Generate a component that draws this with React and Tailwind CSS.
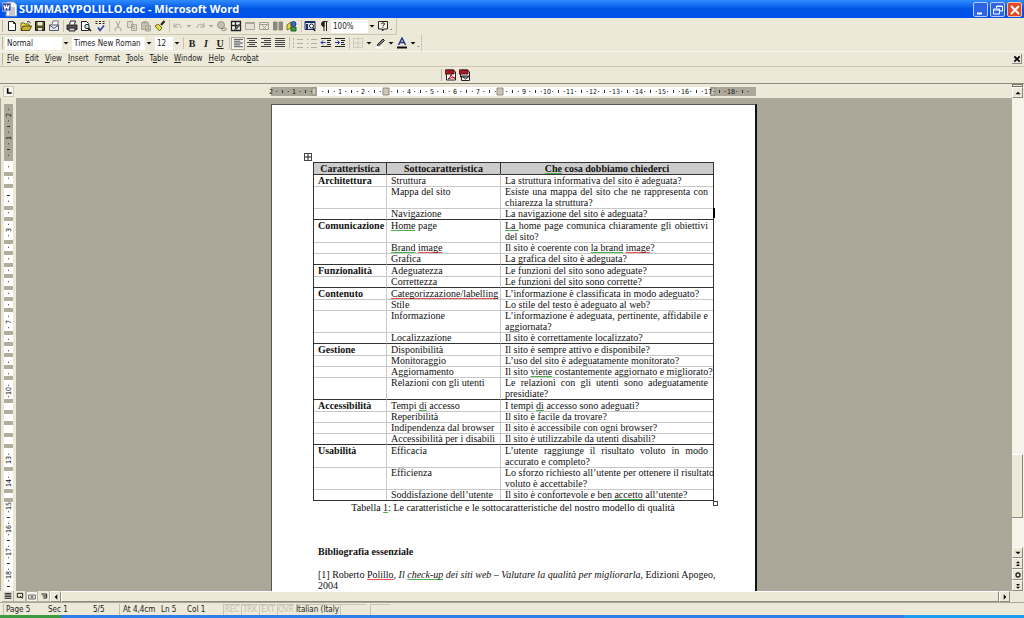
import { Fragment } from 'react';
import clsx from 'clsx';

// a question is a list of lines, the way the document breaks them
const GROUPS = [
  {
    name: 'Architettura',
    rows: [
      ['Struttura', ['La struttura informativa del sito è adeguata?']],
      ['Mappa del sito', ['Esiste una mappa del sito che ne rappresenta con', 'chiarezza la struttura?']],
      ['Navigazione', ['La navigazione del sito è adeguata?'], true],
    ],
  },
  {
    name: 'Comunicazione',
    rows: [
      [<><Green>Home</Green> page</>, [<><Green>La </Green>home page comunica chiaramente gli obiettivi</>, 'del sito?']],
      [<><Green>Brand</Green> <Red>image</Red></>, [<>Il sito è coerente con <Green>la brand</Green> <Red>image</Red>?</>]],
      ['Grafica', ['La grafica del sito è adeguata?']],
    ],
  },
  {
    name: 'Funzionalità',
    rows: [
      ['Adeguatezza', ['Le funzioni del sito sono adeguate?']],
      ['Correttezza', ['Le funzioni del sito sono corrette?']],
    ],
  },
  {
    name: 'Contenuto',
    rows: [
      [<Red>Categorizzazione/labelling</Red>, ['L’informazione è classificata in modo adeguato?']],
      ['Stile', ['Lo stile del testo è adeguato al web?']],
      ['Informazione', ['L’informazione è adeguata, pertinente, affidabile e', 'aggiornata?']],
      ['Localizzazione', ['Il sito è correttamente localizzato?']],
    ],
  },
  {
    name: 'Gestione',
    rows: [
      ['Disponibilità', ['Il sito è sempre attivo e disponibile?']],
      ['Monitoraggio', ['L’uso del sito è adeguatamente monitorato?']],
      ['Aggiornamento', [<>Il sito <Green>viene</Green> costantemente aggiornato e migliorato?</>]],
      ['Relazioni con gli utenti', ['Le relazioni con gli utenti sono adeguatamente', 'presidiate?']],
    ],
  },
  {
    name: 'Accessibilità',
    rows: [
      [<>Tempi <Green>di</Green> accesso</>, [<>I tempi <Green>di</Green> accesso sono adeguati?</>]],
      ['Reperibilità', ['Il sito è facile da trovare?']],
      ['Indipendenza dal browser', ['Il sito è accessibile con ogni browser?']],
      ['Accessibilità per i disabili', ['Il sito è utilizzabile da utenti disabili?']],
    ],
  },
  {
    name: 'Usabilità',
    rows: [
      ['Efficacia', ['L’utente raggiunge il risultato voluto in modo', 'accurato e completo?']],
      ['Efficienza', ['Lo sforzo richiesto all’utente per ottenere il risultato', 'voluto è accettabile?']],
      ['Soddisfazione dell’utente', [<>Il sito è confortevole e ben <Green>accetto</Green> all’utente?</>]],
    ],
  },
];

const MENUS = [
  ['', 'F', 'ile'], ['', 'E', 'dit'], ['', 'V', 'iew'], ['', 'I', 'nsert'], ['F', 'o', 'rmat'],
  ['', 'T', 'ools'], ['T', 'a', 'ble'], ['', 'W', 'indow'], ['', 'H', 'elp'], ['Acro', 'b', 'at'],
];

// row boundaries shown on the vertical ruler, from the top of the page
const ROW_MARKS = [70, 82, 104, 115, 138, 149, 161, 172, 184, 195, 206, 229, 240, 251, 263, 274, 297, 308, 319, 331, 342, 365, 387, 396];

function Green({ children }) {
  return <span className="underline decoration-[#4fb04f] decoration-solid decoration-1 underline-offset-1 [text-decoration-skip-ink:none]">{children}</span>;
}

function Red({ children }) {
  return <span className="underline decoration-[#f05050] decoration-solid decoration-1 underline-offset-1 [text-decoration-skip-ink:none]">{children}</span>;
}

function Icon({ children, size = 12 }) {
  return (
    <svg width={size} height={size} viewBox="0 0 12 12" fill="none" stroke="#222" strokeWidth="1" className="shrink-0">
      {children}
    </svg>
  );
}

const ICONS = {
  new: <path d="M2.500 1.500h5l2 2v7h-7zM7.500 1.500v2h2" fill="#fff" />,
  open: <><path d="M1 10V3h3l1 1h4v2" fill="#f5e05a" stroke="#6b6414" /><path d="M1 10.500l2-4.500h8.500l-2 4.500z" fill="#c9b52e" stroke="#4b460e" /><path d="M7 2q2-1.500 3.500 1" /></>,
  save: <><path d="M1.500 1.500h9v9h-9z" fill="#55551c" stroke="#111" /><path d="M3.500 2h5v3.500h-5z" fill="#e9e9d6" stroke="none" /><path d="M4 8h4v2.500H4z" fill="#ddd" stroke="none" /></>,
  mail: <><path d="M4 4.500l1-3.500h5.500l-1 4" fill="#fff" stroke="#778" /><path d="M1.500 5h9v5.500h-9z" fill="#e6e9f2" stroke="#556" /><path d="M1.500 5l4.500 3.500 4.500-3.500" stroke="#557" /></>,
  print: <><path d="M3.500 4.500l1-3.500h5l-1 3.500" fill="#fff" /><path d="M1 5h10v4.500H1z" fill="#555" /><path d="M3 8h6v3H3z" fill="#ccc" /></>,
  preview: <><path d="M1.500 1.500h5l2 2v7h-7z" fill="#fff" /><circle cx="7" cy="6.500" r="2.200" fill="#bfe4ee" /><path d="M8.600 8.300l2.400 2.700" strokeWidth="1.600" /></>,
  spell: <><path d="M1.500 3.500h2M5 3.500h2M8.500 3.500h2M1.500 1.500h2M5 1.500h2M8.500 1.500h2" strokeWidth="1.200" /><path d="M4 7.500l2 3 4-5" stroke="#2a3aa8" strokeWidth="1.600" /></>,
  cut: <path d="M4 1l3 7M8 1L5 8M4 11a1.500 1.500 0 1 1 1-3M8 11a1.500 1.500 0 1 0-1-3" stroke="#aaa799" />,
  copy: <path d="M1.500 1.500h5v6h-5zM5.500 4.500h5v6h-5zM7 6.500h2M7 8.500h2" stroke="#aaa799" fill="#dedbcb" />,
  paste: <path d="M1.500 2.500h7v7h-7zM3.500 1.500h3v1.500h-3zM5.500 5.500h5v5.500h-5z" stroke="#aaa799" fill="#c5c2b3" />,
  brush: <><path d="M10.500 1L7 5" strokeWidth="2" /><path d="M4 4l4 4-2.500 3L1 6z" fill="#e9df4c" stroke="#6d6713" /></>,
  undo: <path d="M2 3v4h4M2 6.500C4 3 9 3.500 9 8" stroke="#aaa799" />,
  redo: <path d="M10 3v4H6M10 6.500C8 3 3 3.500 3 8" stroke="#aaa799" />,
  link: <><circle cx="5" cy="5" r="3.500" fill="#c2bfb1" stroke="#9a978a" /><path d="M5 8.500h2q2-2 4 1M5 9.500q2 2 5 .5" stroke="#88857a" /></>,
  tables: <><path d="M1.500 1.500h9v9h-9zM1.500 5.500h9M5.500 1.500v9" fill="#fff" strokeWidth="1.300" /><path d="M5 10l5-6" stroke="#555" strokeWidth="2" /></>,
  table: <><path d="M1.500 2.500h9v7h-9z" stroke="#aaa799" fill="#e6e3d4" /><path d="M1.500 3h9" stroke="#aaa799" strokeWidth="2" /></>,
  excel: <path d="M1.500 2.500h9v7h-9zM1.500 4.500h9M4 5l5 5M9 5l-5 5" stroke="#a3a092" />,
  columns: <path d="M1.500 2h3.500v8H1.500zM7 2h3.500v8H7z" fill="#8b887c" stroke="#8b887c" />,
  drawing: <><path d="M1 5l4-3v6l-4 2z" fill="#e8d84a" stroke="#7a7118" /><circle cx="7.500" cy="4" r="2.500" fill="#3a6ad0" stroke="#1c3c80" /><path d="M5 7h5v4H5z" fill="#3d9a4b" stroke="#1a5a22" /></>,
  docmap: <><path d="M1 1.500h10v8H1z" fill="#dfe6f6" stroke="#1c2c66" /><path d="M1 2h10M3 4v6" stroke="#1c2c66" strokeWidth="2" /><circle cx="7.500" cy="6" r="2" fill="#fff" /><path d="M9 8l2 3" strokeWidth="1.500" /></>,
  para: <><path d="M5.500 1.500h4M6 1v10M8.500 1v10" /><path d="M6 1.500a2.300 2.300 0 0 0 0 5z" fill="#222" /></>,
  help: <><path d="M1.500 1.500h9v7.500H7l-1.500 2v-2h-4z" fill="#f4f2e4" /><path d="M4.500 4q0-1.200 1.500-1.200T7.500 4Q7.500 5 6 5.500v.800M6 7.200v1" /></>,
  left: <path d="M1 1.500h10M1 3.500h7M1 5.500h10M1 7.500h7M1 9.500h10" stroke="#444" />,
  center: <path d="M1 1.500h10M3 3.500h6M1 5.500h10M3 7.500h6M1 9.500h10" stroke="#444" />,
  right: <path d="M1 1.500h10M4 3.500h7M1 5.500h10M4 7.500h7M1 9.500h10" stroke="#444" />,
  justify: <path d="M1 1.500h10M1 3.500h10M1 5.500h10M1 7.500h10M1 9.500h10" stroke="#444" />,
  numbers: <path d="M1.500 1v2.500M1.500 5v2.500M1.500 9v2M5 2.500h6M5 6.500h6M5 10.500h6" stroke="#b3b0a2" />,
  bullets: <path d="M1 2.500h1.500M1 6.500h1.500M1 10.500h1.500M5 2.500h6M5 6.500h6M5 10.500h6" stroke="#b3b0a2" />,
  outdent: <><path d="M1 1.500h10M7 3.500h4M7 5.500h3M7 7.500h4M1 9.500h10" /><path d="M5.500 5.500H1M3 3.500l-2 2 2 2" stroke="#2233aa" /></>,
  indent: <><path d="M1 1.500h10M7 3.500h4M7 5.500h3M7 7.500h4M1 9.500h10" /><path d="M1 5.500h4.500M3.500 3.500l2 2-2 2" stroke="#2233aa" /></>,
  borders: <path d="M1.500 1.500h9v9h-9zM1.500 6h9M6 1.500v9" stroke="#b3b0a2" strokeDasharray="1 1" />,
  marker: <><path d="M3 8l6-6 1.500 1.500-6 5.500z" fill="#888" /><path d="M1 10.500h8" stroke="#fff" strokeWidth="2" /></>,
  color: <><path d="M2.500 8L6 1l3.500 7M3.800 5.500h4.400" stroke="#22307e" strokeWidth="1.400" /><path d="M1 10.500h10" stroke="#111" strokeWidth="2" /></>,
  pdf: <><path d="M1.500 1h7l2 2v8h-9z" fill="#fff" /><path d="M0 1h9v4H0z" fill="#a51d22" stroke="#5b1013" /><path d="M3 10q3-2 3-4.500Q7 9 10 9 6 8 3 10" stroke="#b3161c" /></>,
  pdfMail: <><path d="M1.500 1h7l2 2v5h-9z" fill="#fff" /><path d="M0 1h9v4H0z" fill="#a51d22" stroke="#5b1013" /><path d="M2.500 7h8v4.500h-8zM2.500 7l4 3 4-3" fill="#eee" /></>,
};

function Tool({ name, label, pressed }) {
  return (
    <button
      type="button"
      aria-label={label || name}
      className={clsx('flex h-[13px] w-[14px] shrink-0 items-center justify-center', pressed && 'border border-[#aca899] bg-[#f7f6f0]')}>
      <Icon size={pressed ? 11 : 12}>{ICONS[name]}</Icon>
    </button>
  );
}

function Arrow({ muted }) {
  return (
    <svg width="8" height="8" viewBox="0 0 8 8" className="shrink-0">
      <path d="M1.500 3h5L4 5.500z" fill={muted ? '#aaa799' : '#111'} />
    </svg>
  );
}

function Sep() {
  return <span className="ml-[2px] mr-px h-3 w-px shrink-0 bg-[#c5c2b2]" />;
}

function Grip() {
  return <span className="mx-[2px] h-3 w-px shrink-0 bg-[#b5b2a3]" />;
}

function Picker({ label, value, width }) {
  return (
    <div className="flex items-center">
      <select aria-label={label} className={clsx('h-[13px] appearance-none bg-white pl-[2px] text-[8px] leading-[13px]', width)}>
        <option>{value}</option>
      </select>
      <Arrow />
    </div>
  );
}

function TitleBar() {
  return (
    <header className="flex h-[18px] shrink-0 items-center bg-linear-to-b from-[#2f8bff] via-[#0055e5] to-[#0050ee] px-[2px]">
      <svg width="15" height="16" viewBox="0 0 15 16" className="shrink-0">
        <path d="M5 1h7l3 3v11H4z" fill="#fff" stroke="#89a" />
        <path d="M7 7h6M7 9h6M7 11h6M7 13h6" stroke="#889" />
        <path d="M0 2h9v8H0z" fill="#2b3d9a" stroke="#dfe4ff" strokeWidth=".8" />
        <path d="M1.800 4l1.200 4 1.500-3.500L6 8l1.200-4" fill="none" stroke="#fff" strokeWidth="1.200" />
      </svg>
      <h1 className="ml-[2px] flex-1 font-['Open_Sans',sans-serif] text-[11px] font-bold leading-[18px] text-white">
        SUMMARYPOLILLO.doc - Microsoft Word
      </h1>
      <div className="flex gap-[2px] pt-px">
        <button type="button" aria-label="Minimize" className="flex size-[15px] items-center justify-center rounded-[2px] border border-[#b9cdf8] bg-[#2c64e3]">
          <Icon><path d="M2 9.500h5" stroke="#fff" strokeWidth="2" /></Icon>
        </button>
        <button type="button" aria-label="Restore" className="flex size-[15px] items-center justify-center rounded-[2px] border border-[#b9cdf8] bg-[#2c64e3]">
          <Icon><path d="M4.500 4V2h6v5H8M1.500 5h6v5h-6zM1.500 6h6M4.500 2.500h6" stroke="#fff" /></Icon>
        </button>
        <button type="button" aria-label="Close" className="flex size-[15px] items-center justify-center rounded-[2px] border border-[#f0c3b8] bg-[#df4a25]">
          <Icon><path d="M2 2l8 8M10 2l-8 8" stroke="#fff" strokeWidth="2" /></Icon>
        </button>
      </div>
    </header>
  );
}

function StandardBar() {
  return (
    <div className="flex h-[17px] shrink-0">
      <div className="flex items-center border-b border-r border-[#c9c6b6] pr-1">
        <Grip />
        <Tool name="new" /><Tool name="open" /><Tool name="save" /><Tool name="mail" />
        <Sep />
        <Tool name="print" /><Tool name="preview" /><Tool name="spell" />
        <Sep />
        <Tool name="cut" /><Tool name="copy" /><Tool name="paste" /><Tool name="brush" />
        <Sep />
        <Tool name="undo" /><Arrow muted /><Tool name="redo" /><Arrow muted />
        <Tool name="link" /><Tool name="tables" /><Tool name="table" /><Tool name="excel" /><Tool name="columns" /><Tool name="drawing" />
        <Sep />
        <Tool name="docmap" /><Tool name="para" />
        <Picker label="Zoom" value="100%" width="w-[37px]" />
        <Tool name="help" />
        <span className="self-end text-[8px] leading-[12px]">.</span>
      </div>
    </div>
  );
}

function FormatBar() {
  const letter = "h-[13px] w-[14px] font-['Liberation_Serif',serif] text-[10px] font-bold leading-[13px]";
  return (
    <div className="flex h-4 shrink-0">
      <div className="flex items-center border-r border-[#c9c6b6] pr-[2px]">
        <Grip />
        <Picker label="Style" value="Normal" width="w-[57px]" />
        <span className="w-[2px]" />
        <Picker label="Font" value="Times New Roman" width="w-[73px]" />
        <span className="w-[2px]" />
        <Picker label="Size" value="12" width="w-[18px]" />
        <Sep />
        <button type="button" className={letter}>B</button>
        <button type="button" className={clsx(letter, 'italic')}>I</button>
        <button type="button" className={clsx(letter, 'underline')}>U</button>
        <Sep />
        <Tool name="left" pressed /><Tool name="center" /><Tool name="right" /><Tool name="justify" />
        <Sep />
        <Tool name="numbers" /><Tool name="bullets" /><Tool name="outdent" /><Tool name="indent" />
        <Sep />
        <Tool name="borders" /><Arrow /><Tool name="marker" /><Arrow /><Tool name="color" /><Arrow />
        <span className="self-end text-[8px] leading-[12px]">.</span>
      </div>
    </div>
  );
}

function MenuBar() {
  return (
    <nav className="flex h-4 shrink-0 items-center border-b border-t border-b-[#c9c6b6] border-t-[#f6f5ee] pr-[2px]">
      <Grip />
      <div className="flex flex-1 gap-[6px] pl-[2px]">
        {MENUS.map(([a, key, b]) => (
          <button type="button" key={a + key + b}>{a}<u>{key}</u>{b}</button>
        ))}
      </div>
      <button type="button" aria-label="Close document" className="flex size-[10px] items-center justify-center border-b border-r border-[#8d8a7d]">
        <Icon size={8}><path d="M2 2l8 8M10 2l-8 8" strokeWidth="2.500" stroke="#000" /></Icon>
      </button>
    </nav>
  );
}

function HorizontalRuler() {
  const ticks = [];
  for (let i = -8; i < 76; i++) {
    const x = 46 + i * 5.75;
    if (i % 4 === 0) {
      const n = Math.abs(i / 4);
      if (n && n !== 3 && n !== 8) ticks.push(<text key={i} x={x} y="7" textAnchor="middle">{n}</text>);
    } else {
      ticks.push(<path key={i} d={i % 2 ? `M${x} 4v1` : `M${x} 3v3`} stroke="#333" />);
    }
  }
  return (
    <div className="flex h-[15px] shrink-0 items-center border-t border-[#8f8c7f]">
      <button type="button" aria-label="Tab stop" className="ml-[3px] flex size-[11px] items-center justify-center border border-[#c9c6b6] bg-[#f6f5ee]">
        <Icon size={8}><path d="M4 2v7h6" strokeWidth="2.500" stroke="#000" /></Icon>
      </button>
      <div className="flex flex-1 justify-center">
        <svg width="485" height="9" className="overflow-visible text-[7px]" fill="#111">
          <path d="M0 0h485v9H0z" fill="#aba899" />
          <path d="M46 0h393v9H46z" fill="#fff" />
          <path d="M41 1h4v7h-4zM112 1h6v7h-6zM226 1h6v7h-6zM440 1h4v7h-4z" fill="#c9c6b8" stroke="#8f8c7f" />
          {ticks}
        </svg>
      </div>
      <div className="flex w-3 flex-col self-stretch">
        <span className="h-[3px] w-[11px] border border-[#77746a]" />
        <ScrollButton label="Scroll up" d="M2 8h8L6 4z" />
      </div>
    </div>
  );
}

function VerticalRuler() {
  const ticks = [];
  for (let i = -9; i < 75; i++) {
    const y = 57 + i * 5.75;
    const n = Math.abs(i / 4);
    const covered = ROW_MARKS.some(m => Math.abs(m - y) < 4);
    if (i % 4 === 0) {
      if (n && !covered) ticks.push(<text key={i} transform={`translate(7 ${y}) rotate(-90)`} textAnchor="middle">{n}</text>);
    } else if (!covered) {
      ticks.push(<path key={i} d={i % 2 ? `M4 ${y}h1` : `M3 ${y}h3`} stroke="#333" />);
    }
  }
  return (
    <div className="w-4 shrink-0 overflow-hidden border-l border-[#aba899] pl-[3px] pt-[6px]">
      <svg width="9" height="600" className="text-[7px]" fill="#111">
        <path d="M0 0h9v57H0z" fill="#aba899" />
        <path d="M0 57h9v543H0z" fill="#fff" />
        {ROW_MARKS.map(y => <path key={y} d={`M0 ${y - 2}h9v4H0z`} fill="#b0ada0" />)}
        {ticks}
      </svg>
    </div>
  );
}

function ScrollButton({ label, d, circle }) {
  return (
    <button type="button" aria-label={label} className="flex size-[11px] shrink-0 items-center justify-center border border-b-[#8d8a7d] border-l-[#fbfaf5] border-r-[#8d8a7d] border-t-[#fbfaf5] bg-[#ece9d8]">
      <Icon size={8}>{circle ? <circle cx="6" cy="6" r="3" strokeWidth="2" /> : <path d={d} fill="#000" stroke="none" />}</Icon>
    </button>
  );
}

function VerticalScroll() {
  return (
    <div className="flex w-3 shrink-0 flex-col bg-[#f5f3ea]">
      <div className="flex flex-1 flex-col">
        <div className="grow-[357]" />
        <div className="w-[11px] grow-[62] border-b border-r border-t border-b-[#8d8a7d] border-r-[#8d8a7d] border-t-white bg-[#ece9d8]" />
        <div className="grow-[29]" />
      </div>
      <ScrollButton label="Scroll down" d="M2 4h8L6 8z" />
      <ScrollButton label="Previous page" d="M3 5l3-3 3 3zM3 9l3-3 3 3z" />
      <ScrollButton label="Select browse object" circle />
      <ScrollButton label="Next page" d="M3 3h6L6 6zM3 7h6l-3 3z" />
    </div>
  );
}

// every line but the last one is stretched to both margins
function Lines({ lines }) {
  return lines.map((line, i) => (
    <span key={i} className={clsx('block whitespace-nowrap', i < lines.length - 1 && '[text-align-last:justify]')}>{line}</span>
  ));
}

function QualityTable() {
  return (
    <table className="-ml-[5px] w-[401px] table-fixed border-separate border-spacing-0 border border-[#333]">
      <thead>
        <tr className="bg-[#cccccc] text-center font-bold">
          <th className="w-[72px] p-0">Caratteristica</th>
          <th className="w-[114px] border-l border-[#333] p-0">Sottocaratteristica</th>
          <th className="border-l border-[#333] p-0"><Green>Che</Green> cosa dobbiamo chiederci</th>
        </tr>
      </thead>
      {GROUPS.map(group => (
        <tbody key={group.name}>
          {group.rows.map(([sub, question, caret], i) => {
            const line = i === 0 ? 'border-t border-t-[#333]' : 'shadow-[inset_0_1px_0_#c8c8c8]';
            return (
              <tr key={i} className="align-top">
                <th scope="row" className={clsx('whitespace-nowrap p-0 pl-1 text-left font-bold', line)}>
                  {i === 0 && group.name}
                </th>
                <td className={clsx('whitespace-nowrap border-l border-l-[#c8c8c8] p-0 pl-1', line)}>{sub}</td>
                <td className={clsx('relative border-l border-l-[#c8c8c8] py-0 pl-1 pr-[5px]', line)}>
                  <Lines lines={question} />
                  {caret && <span className="absolute -right-[2px] top-0 h-[10px] w-[2px] bg-black" />}
                </td>
              </tr>
            );
          })}
        </tbody>
      ))}
    </table>
  );
}

function Page() {
  return (
    <main className="w-[486px] shrink-0 border-l border-r-2 border-t border-[#111] border-l-[#555] border-t-[#555] bg-white pl-[46px] pr-[47px] pt-[57px] font-['Liberation_Serif',serif] text-[10px] leading-[11px] text-[#111]">
      <div className="relative">
        <button type="button" aria-label="Move table" className="absolute -left-[14px] -top-[9px] flex size-[8px] items-center justify-center border border-[#444] bg-white">
          <Icon size={6}><path d="M6 0v12M0 6h12" strokeWidth="2" /></Icon>
        </button>
        <QualityTable />
        <span className="absolute -bottom-[5px] -right-[10px] size-[5px] border border-[#444] bg-white" />
      </div>
      <p className="mt-px text-center">Tabella <Green>1</Green>: Le caratteristiche e le sottocaratteristiche del nostro modello di qualità</p>
      <h2 className="mt-[33px] font-bold">Bibliografia essenziale</h2>
      <p className="mb-3 mt-3">
        <Lines
          lines={[
            <Fragment key="work">[1] Roberto <Red>Polillo</Red>, <i>Il <Green>check-up</Green> dei siti web – Valutare la qualità per migliorarla</i>, Edizioni Apogeo,</Fragment>,
            '2004',
          ]}
        />
      </p>
    </main>
  );
}

function BottomScroll() {
  return (
    <div className="flex h-3 shrink-0 items-center border-b border-[#aca899] pl-[2px]">
      {['normal', 'web', 'print', 'outline'].map(view => (
        <button type="button" key={view} aria-label={`${view} view`} className={clsx('flex h-[11px] w-[12px] items-center justify-center border-b border-r border-[#b5b2a3]', view === 'print' && 'border bg-[#f6f5ee]')}>
          <Icon size={8}>
            {view === 'normal' && <path d="M1 2h10M1 4.500h10M1 7h10M1 9.500h10" strokeWidth="1.500" />}
            {view === 'web' && <path d="M2 2h8v6H2zM6 6l4 4" strokeWidth="1.500" />}
            {view === 'print' && <path d="M1 3h10v6H1zM4 5h4M4 7h4" />}
            {view === 'outline' && <path d="M2 3h8v6H5M4 6h5" strokeWidth="1.500" />}
          </Icon>
        </button>
      ))}
      <ScrollButton label="Scroll left" d="M8 2v8L4 6z" />
      <div className="h-[11px] flex-1 border border-b-[#8d8a7d] border-l-white border-r-[#8d8a7d] border-t-white" />
      <ScrollButton label="Scroll right" d="M4 2v8l4-4z" />
      <span className="w-[14px]" />
    </div>
  );
}

function StatusBar() {
  return (
    <footer className="flex h-[12px] shrink-0 items-center pl-[3px] leading-[11px]">
      <div className="flex h-[11px] items-center border-l border-[#c0bdad] pl-[2px]">
        <span className="w-[42px]">Page 5</span>
        <span className="w-[45px]">Sec 1</span>
        <span className="w-[26px]">5/5</span>
      </div>
      <div className="flex h-[11px] items-center border-l border-[#c0bdad] pl-[3px]">
        <span className="w-[38px]">At 4,4cm</span>
        <span className="w-[26px]">Ln 5</span>
        <span className="w-[36px]">Col 1</span>
      </div>
      <div className="flex gap-px text-[#c3c0b0]">
        {['REC', 'TRK', 'EXT', 'OVR'].map(flag => (
          <span key={flag} className="h-[11px] w-[17px] border-l border-t border-[#c9c6b6] text-center leading-[10px]">{flag}</span>
        ))}
      </div>
      <span className="ml-[2px] h-[11px] w-[44px] whitespace-nowrap border-t border-[#c9c6b6] leading-[10px]">Italian (Italy</span>
      <span className="h-[11px] w-[26px] border-l border-t border-[#c9c6b6]" />
      <span className="ml-[4px] h-[11px] w-[20px] border-l border-t border-[#c9c6b6]" />
    </footer>
  );
}

export default function App() {
  return (
    <div className="flex h-screen flex-col overflow-hidden bg-[#ece9d8] font-['DejaVu_Sans_Condensed','DejaVu_Sans',sans-serif] text-[8px] leading-[12px] text-[#222]">
      <TitleBar />
      <StandardBar />
      <FormatBar />
      <MenuBar />
      <div className="flex h-4 shrink-0 items-center justify-center pr-[114px]">
        <Grip />
        <Tool name="pdf" label="Convert to PDF" />
        <Tool name="pdfMail" label="Convert to PDF and e-mail" />
      </div>
      <HorizontalRuler />
      <div className="flex min-h-0 flex-1">
        <VerticalRuler />
        <div className="flex flex-1 items-start justify-center overflow-hidden bg-[#aba899] pt-[6px]">
          <Page />
        </div>
        <VerticalScroll />
      </div>
      <BottomScroll />
      <StatusBar />
      <div className="flex h-[3px] shrink-0 bg-[#2f7ee8]">
        <div className="w-[61px] bg-[#3c9a3f]" />
        <div className="flex-1" />
        <div className="w-[120px] bg-[#1a9cf0]" />
      </div>
    </div>
  );
}
